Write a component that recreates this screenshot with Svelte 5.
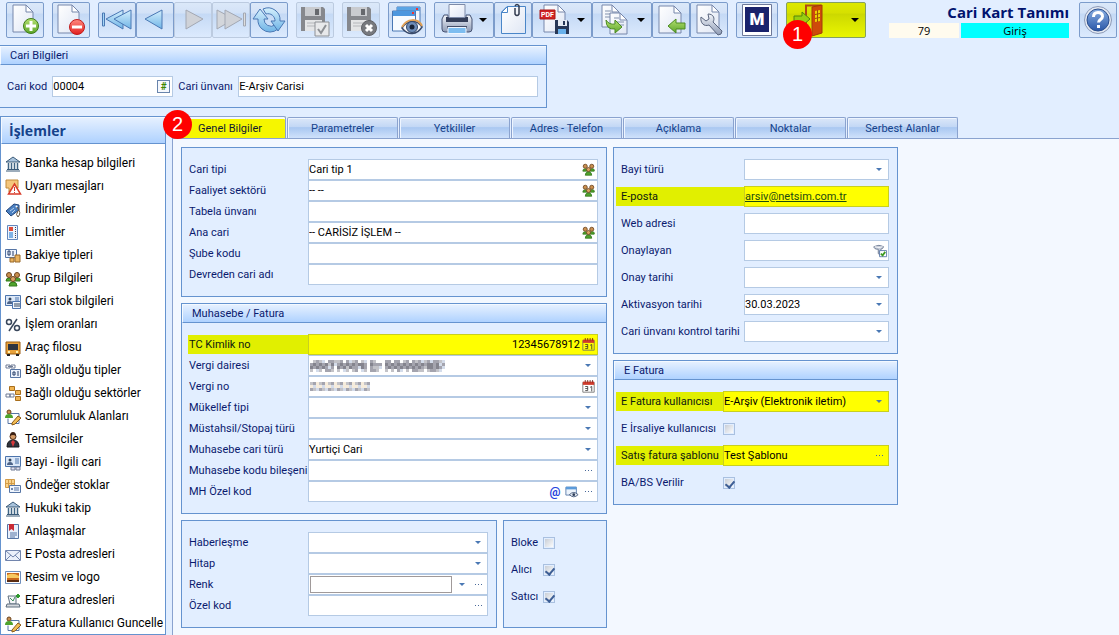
<script>
  const blueDoc = (x, y, w, h) =>
    `<path d="M${x} ${y}h${w - 7}l7 7v${h - 7}h${-w}z" fill="url(#paper)" stroke="#7787ab"/><path d="M${x + w - 7} ${y}v7h7z" fill="#fff" stroke="#7787ab"/>`;

  const floppy =
    '<path d="M5 5h22l2 2v22H5z" fill="#86888d"/><path d="M9 5h16v9H9z" fill="#c9cbcf"/><path d="M19 7h4v6h-4z" fill="#66686d"/><path d="M9 18h17v11H9z" fill="#e4e5e7"/><path d="M11 21h13M11 24h13" stroke="#b5b7bb"/>';

  // 38 x 36 grid, one drawing per toolbar button
  const art = {
    add: blueDoc(7, 3, 20, 27) +
      '<circle cx="25" cy="24" r="7.5" fill="url(#green)" stroke="#3f7d18"/><path d="M25 19v10M20 24h10" stroke="#fff" stroke-width="3"/>',
    remove: blueDoc(6, 3, 21, 28) +
      '<circle cx="25" cy="25" r="7.5" fill="url(#red)" stroke="#c11b1b"/><path d="M20 25h10" stroke="#fff" stroke-width="3"/>',
    first:
      '<path d="M4.5 11h2v13h-2z" fill="#a5d6f5" stroke="#4a78b4"/><path d="M25 8L8 17l17 10z" fill="url(#sky)" stroke="#4a78b4"/><path d="M33 8l-17 9 17 10z" fill="url(#sky)" stroke="#4a78b4"/>',
    prev: '<path d="M26 8L9 17l17 10z" fill="url(#sky)" stroke="#4a78b4"/>',
    next: '<path d="M12 8l17 9-17 10z" fill="#cfd2d8" stroke="#a3a8b3"/>',
    last:
      '<path d="M5 8l17 9-17 10z" fill="#d3d6db" stroke="#a3a8b3"/><path d="M13 8l17 9-17 10z" fill="#cfd2d8" stroke="#a3a8b3"/><path d="M31.5 11h2v13h-2z" fill="#ddd" stroke="#a3a8b3"/>',
    refresh:
      '<path d="M12 27a12 12 0 0 0 16 0l-3-4a7 7 0 0 1-11-6h4l-8-10-7 10h5a12 12 0 0 0 4 10z" fill="url(#sky)" stroke="#4a78b4"/><path d="M13 7a12 12 0 0 1 17 12h5l-7 10-7-10h4a7 7 0 0 0-9-7z" fill="url(#sky)" stroke="#4a78b4"/>',
    save: floppy +
      '<path d="M19 20h14v14H19z" fill="#e8e9eb" stroke="#8d9095"/><path d="M22 27l3 4 5-8" fill="none" stroke="#8d9095" stroke-width="2"/>',
    cancel: floppy +
      '<circle cx="27" cy="26" r="7.5" fill="#77797e" stroke="#5f6166"/><path d="M24 23l6 6M30 23l-6 6" stroke="#fff" stroke-width="3"/>',
    preview:
      '<path d="M9 5h23v17H9z" fill="#f2f7fd" stroke="#4a78b4"/><path d="M9 5h23v4H9z" fill="#5ba4e4"/><path d="M4.5 9h23v20h-23z" fill="#f7fbff" stroke="#4a78b4"/><path d="M5 9h22v5H5z" fill="#4d97de"/><path d="M24 10h2v2h-2zM28 6h2v2h-2z" fill="#e33"/><path d="M14 26c5-8 15-9 20-1-5 8-14 9-20 1z" fill="#fff" stroke="#384a6b" stroke-width="1.5"/><path d="M14 25c5-9 16-9 20-1" fill="none" stroke="#e0a055" stroke-width="2"/><circle cx="24" cy="25" r="5.5" fill="#6e8db8" stroke="#334768"/><circle cx="24" cy="25" r="2.5" fill="#182438"/>',
    print:
      '<path d="M10 13h4v5h18v-5h4l2 4v10q0 3-3 3H11q-3 0-3-3V17z" fill="url(#steel)" stroke="#465373"/><path d="M12 15h22v5H12z" fill="#343e58"/><path d="M15 2.5h16v13H15z" fill="url(#paper)" stroke="#7e8ba8"/><path d="M13 24h20v3H13z" fill="#454f69"/><path d="M14 25.5h18v6H14z" fill="#7dbdf0" stroke="#eef5ff"/>',
    attach:
      '<path d="M13 4.5h18.5v27h-24V10z" fill="url(#paper)" stroke="#4a86c8"/><path d="M7.5 10.5h6v-6z" fill="#fff" stroke="#4a86c8"/><path d="M21 6v6q2 3 4 0V4q-2-3-4 0" fill="none" stroke="#333c50" stroke-width="1.5"/>',
    pdf: blueDoc(12, 3, 21, 27) +
      '<path d="M8 8h15v9H8z" fill="#d32323" stroke="#a81818"/><text x="9" y="15" font-size="7" font-weight="bold" fill="#fff">PDF</text><path d="M23 18h12l2 2v12H23z" fill="#283756"/><path d="M26 18h9v6h-9z" fill="#e6ebf3"/><path d="M31 19h2v4h-2z" fill="#283756"/><path d="M26 27h8v5h-8z" fill="#69b0ea"/>',
    copy: blueDoc(10, 3, 17, 22) +
      '<path d="M13 9h6M13 12h10M13 15h6" stroke="#8392ad"/>' + blueDoc(18, 11, 17, 21) +
      '<path d="M22 16h5M22 20h10M26 23h6" stroke="#8392ad"/><path d="M14 18q3 5 9 4v-4l7 7-7 6v-4q-9 1-9-9z" fill="url(#green)" stroke="#4c8b22"/>',
    import: blueDoc(7, 4, 22, 27) +
      '<path d="M16 24l8-7v4h9v6h-9v4z" fill="url(#green)" stroke="#4c8b22"/>',
    tools: blueDoc(7, 3, 22, 28) +
      '<path d="M11 15l5 4 3-2-1-5c6 0 7 5 5 8l9 9q0 4-4 4l-9-10c-5 2-9-2-8-8z" fill="url(#steel)" stroke="#5b667f"/>',
    mark:
      '<path d="M6.5 2.5h29v31h-29z" fill="#fff" stroke="#6c7899"/><path d="M9 5h24v25H9z" fill="#1a236c"/><text x="21" y="23" text-anchor="middle" font-size="17" font-weight="900" fill="#fff">M</text>',
    exit:
      '<path d="M20 30V3.5h14V30" fill="none" stroke="#b04a10" stroke-width="2"/><path d="M26 5l10-2v28l-10 3z" fill="#ce4a0a" stroke="#a33a08"/><path d="M29 9l5-1v11l-5 1z" fill="#eed200"/><path d="M31.5 8v12M29 12.5l5-1M29 16.5l5-1" stroke="#a05008"/><path d="M8 14h8v-4l8 7-8 7v-4H8z" fill="#98cf10" stroke="#54850c"/>',
    help:
      '<circle cx="19" cy="18" r="13.5" fill="#e4e9f2" stroke="#8c9ab8"/><circle cx="19" cy="18" r="11" fill="url(#orb)" stroke="#2c4f8e"/><path d="M14.5 15q0-4.5 4.5-4.5t4.5 4c0 3-4 3-4 6" fill="none" stroke="#fff" stroke-width="3"/><path d="M18 23h3v3h-3z" fill="#fff"/>'
  };

  const pencil = '<path d="M7 14l6-7 3 2-6 6-3 1z" fill="#f2bd55" stroke="#8a5a18"/>';
  const link = '<path d="M1 2h4v3H1zM6 2h4v3H6zM3 3.5h5" fill="none" stroke="#6e7b94"/>';
  const bank =
    '<path d="M1 6l7-5 7 5z" fill="#a9c3dc" stroke="#3a5a78"/><path d="M3.5 7v6M6.5 7v6M9.5 7v6M12.5 7v6" stroke="#3f6484" stroke-width="1.5"/><path d="M2 13.5h12M1 15h14" stroke="#3a5a78"/>';
  const people =
    '<path d="M1 10q0-3 3-3t4 3zM8 10q0-3 4-3t3 3zM4 15q0-4 4-4t4 4z" fill="#4fa32c" stroke="#34781c"/><circle cx="4" cy="4" r="2.5" fill="#c98f4e" stroke="#6b431d"/><circle cx="12" cy="4" r="2.5" fill="#c98f4e" stroke="#6b431d"/><circle cx="8" cy="8" r="2.5" fill="#d9a263" stroke="#6b431d"/>';
  const card =
    '<path d="M.5 1.5h15v10H.5z" fill="#dce8f8" stroke="#4c74ac"/><circle cx="5" cy="5" r="1.5" fill="#33475f"/><path d="M2 10q0-3 3-3t3 3z" fill="#4e6488"/><path d="M10 4h4M10 6h4M10 8h4" stroke="#4c74ac"/>';
  const person =
    '<path d="M6 4.5h8v10H3v-5" fill="#fff" stroke="#5675a5"/><circle cx="4" cy="3" r="2" fill="#c98f4e" stroke="#6b431d"/><path d="M0 9q0-4 4-4t4 4z" fill="#4fa32c"/>';

  // 16 x 16 grid
  const glyphs = {
    bank,
    people,
    warning:
      '<path d="M1 1h12v8H7l-3 4V9H1z" fill="#f4c67c" stroke="#c28a3b"/><path d="M9.5 5l6 10h-12z" fill="#fff" stroke="#d93d2b" stroke-width="1.5"/><path d="M9.5 8v4M9.5 13v1" stroke="#d93d2b"/>',
    tag:
      '<path d="M1 9l8-7 5 1v5l-8 6z" fill="#4a7fc0" stroke="#23477d"/><circle cx="11.5" cy="4.5" r="1" fill="#fff"/><path d="M5 9l4-3M7 11l3-3" stroke="#b8d2f0"/><path d="M12 5q5 6 1 10-3-2 0-6" fill="none" stroke="#6b5a45"/>',
    limit:
      '<path d="M2.5.5h10v14h-10z" fill="#eef4fd" stroke="#6387bd"/><path d="M4 2h4v4H4z" fill="#df4b38"/><path d="M4 7h4v6H4z" fill="#7fb2e6"/><path d="M10.5 2v12" stroke="#445" stroke-dasharray="1 1"/>',
    balance:
      '<path d="M.5 1.5h11v8H.5z" fill="#edf3fd" stroke="#5675a5"/><path d="M3 3h2v4H3zM8 3v5" fill="none" stroke="#223b66"/><path d="M5 10h4v4H5zM10 7h5v7h-5z" fill="#e8b25e" stroke="#98682a"/>',
    stock: card + '<path d="M7.5 7.5h8v7h-8z" fill="#eff5fd" stroke="#4c74ac"/><path d="M10 9v4M12 9v4M14 9v4" stroke="#33475f"/>',
    percent:
      '<circle cx="4" cy="5" r="2.5" fill="none" stroke="#38465a" stroke-width="1.5"/><circle cx="12" cy="11" r="2.5" fill="none" stroke="#38465a" stroke-width="1.5"/><path d="M12 2L4 14" stroke="#38465a" stroke-width="1.5"/>',
    bus:
      '<path d="M1 2h14v12H1z" fill="#e8a13a" stroke="#9b5e14"/><path d="M3 4h10v6H3z" fill="#2e3440"/><path d="M3 12h2M11 12h2" stroke="#fff2b0" stroke-width="2"/><path d="M2 15h3M11 15h3" stroke="#222" stroke-width="2"/>',
    linkType: link + '<path d="M5.5 6.5h10v8h-10z" fill="#edf3fd" stroke="#5675a5"/><path d="M8 9h2v3H8zM13 8v5" fill="none" stroke="#223b66"/>',
    sector:
      '<path d="M4.5.5h5v4h-5zM10.5 4.5h5v4h-5zM10.5 10.5h5v4h-5z" fill="#f0b452" stroke="#a86e1c"/><path d="M1 8h4v3H1zM5 8h4v3H5z" fill="none" stroke="#6e7b94"/>',
    area: person + pencil,
    agent:
      '<path d="M2 15q0-7 6-7t6 7z" fill="#30343c" stroke="#15171b"/><path d="M8 8l2 2-2 5-2-5z" fill="#d8393b"/><circle cx="8" cy="4.5" r="3" fill="#d59b66" stroke="#4d2a14"/><path d="M5 4q0-4 3-4t3 4q-3-2-6 0z" fill="#3c2113"/>',
    dealer: card + '<path d="M6 12h4v3H6zM11 12h4v3h-4z" fill="#dde" stroke="#6e7b94"/>',
    preset:
      '<path d="M.5 1.5h9v8h-9z" fill="#f9d38c" stroke="#d39c48"/><path d="M.5 5.5h9M3.5 1.5v8M6.5 1.5v8" stroke="#d39c48"/><path d="M4.5 7.5h11v7h-11z" fill="#eff5fd" stroke="#5675a5"/><path d="M9 10h5M9 12h5" stroke="#5675a5"/><circle cx="7" cy="11" r="1" fill="#44618f"/>',
    contract:
      '<path d="M2.5.5h11v14h-11z" fill="#e7f0fc" stroke="#5675a5"/><path d="M4 0h5v7L6.5 5 4 7z" fill="#c92a35"/><path d="M5 9h7M5 11h7M5 13h5" stroke="#5675a5"/>',
    mail:
      '<path d="M.5 3.5h15v10H.5z" fill="#eaf0fa" stroke="#7285ad"/><path d="M1 4l7 6 7-6M1 13l5-5M15 13l-5-5" fill="none" stroke="#7285ad"/>',
    picture:
      '<path d="M.5 1.5h15v12H.5z" fill="#fdfdfd" stroke="#6f8fbd"/><path d="M2 3h12v9H2z" fill="#c8681c"/><path d="M2 5q6-3 12 1v2H2z" fill="#f7c860"/><path d="M2 10h12v2H2z" fill="#5a2c12"/>',
    invoice:
      '<path d="M3 3h8v8H5z" fill="#f4f6f8" stroke="#5e6e7e"/><path d="M2 11h12l1 3H1z" fill="#d5d9de" stroke="#5e6e7e"/><path d="M11 3h4M13 1v4" stroke="#2e9a2e" stroke-width="2"/><path d="M5 5l3 3 2-4" fill="none" stroke="#3a8a5a"/>',
    calendar:
      '<path d="M1 3h14v12H1z" fill="var(--sheet, #fff)" stroke="#6b6b6b"/><path d="M1 2h14v4H1z" fill="#cf3b2c"/><path d="M4 0v3M7 0v3M10 0v3M13 0v3" stroke="#6d1d14"/><path d="M4 8h3v5H4M4 10.5h3M10 9l2-1v6" fill="none" stroke="#333"/>',
    at: '<text x="8" y="12" text-anchor="middle" font-size="14" font-weight="bold" fill="#2342dd">@</text>',
    view:
      '<path d="M1 2.5h12v9H1z" fill="#edf4fc" stroke="#587aa8"/><path d="M1 2h12v3H1z" fill="#5b9bdb"/><path d="M5 11q5-5 10 0-5 5-10 0z" fill="#dfe7f1" stroke="#47597a"/><circle cx="10" cy="11" r="1.5" fill="#2b3a55"/>',
    filter:
      '<path d="M1 3q6-3 11 0 0 2-3 3v7l-3-2V6Q1 6 1 3z" fill="#c5ccd8" stroke="#68768f"/><path d="M2 3q5 2 9 0" fill="none" stroke="#fff"/><path d="M7.5 7.5h8v7h-8z" fill="#fff" stroke="#5675a5"/><path d="M9 11l2 2 3-4" fill="none" stroke="#3c9a22" stroke-width="2"/>'
  };

  const toolbar = [
    [{ id: 'add', title: 'Yeni' }],
    [{ id: 'remove', title: 'Sil' }],
    [
      { id: 'first', title: 'İlk kayıt' },
      { id: 'prev', title: 'Önceki kayıt' },
      { id: 'next', title: 'Sonraki kayıt', off: true },
      { id: 'last', title: 'Son kayıt', off: true },
      { id: 'refresh', title: 'Yenile' }
    ],
    [{ id: 'save', title: 'Kaydet', off: true }],
    [{ id: 'cancel', title: 'Vazgeç', off: true }],
    [{ id: 'preview', title: 'Önizleme' }],
    [
      { id: 'print', title: 'Yazdır', menu: true },
      { id: 'attach', title: 'Ekler' },
      { id: 'pdf', title: 'PDF kaydet', menu: true },
      { id: 'copy', title: 'Kopyala', menu: true },
      { id: 'import', title: 'Aktar' },
      { id: 'tools', title: 'Ayarlar' }
    ],
    [{ id: 'mark', title: 'M', wide: true }],
    [{ id: 'exit', title: 'Çıkış', menu: true, exit: true }]
  ];

  const actions = [
    ['bank', 'Banka hesap bilgileri'],
    ['warning', 'Uyarı mesajları'],
    ['tag', 'İndirimler'],
    ['limit', 'Limitler'],
    ['balance', 'Bakiye tipleri'],
    ['people', 'Grup Bilgileri'],
    ['stock', 'Cari stok bilgileri'],
    ['percent', 'İşlem oranları'],
    ['bus', 'Araç filosu'],
    ['linkType', 'Bağlı olduğu tipler'],
    ['sector', 'Bağlı olduğu sektörler'],
    ['area', 'Sorumluluk Alanları'],
    ['agent', 'Temsilciler'],
    ['dealer', 'Bayi - İlgili cari'],
    ['preset', 'Öndeğer stoklar'],
    ['bank', 'Hukuki takip'],
    ['contract', 'Anlaşmalar'],
    ['mail', 'E Posta adresleri'],
    ['picture', 'Resim ve logo'],
    ['invoice', 'EFatura adresleri'],
    ['area', 'EFatura Kullanıcı Guncelle']
  ];

  const tabs = ['Genel Bilgiler', 'Parametreler', 'Yetkililer', 'Adres - Telefon', 'Açıklama', 'Noktalar', 'Serbest Alanlar'];
  let activeTab = $state(0);

  const general = [
    { id: 'tip', label: 'Cari tipi', value: 'Cari tip 1', icons: ['people'] },
    { id: 'sektor', label: 'Faaliyet sektörü', value: '-- --', icons: ['people'] },
    { id: 'tabela', label: 'Tabela ünvanı' },
    { id: 'ana', label: 'Ana cari', value: '-- CARİSİZ İŞLEM --', icons: ['people'] },
    { id: 'sube', label: 'Şube kodu' },
    { id: 'devreden', label: 'Devreden cari adı' }
  ];

  const accounting = [
    { id: 'tc', label: 'TC Kimlik no', value: '12345678912', icons: ['calendar'], marked: true, right: true },
    { id: 'daire', label: 'Vergi dairesi', select: true, mask: 'office' },
    { id: 'vergi', label: 'Vergi no', icons: ['calendar'], mask: 'number' },
    { id: 'mukellef', label: 'Mükellef tipi', select: true },
    { id: 'stopaj', label: 'Müstahsil/Stopaj türü', select: true },
    { id: 'cariTuru', label: 'Muhasebe cari türü', value: 'Yurtiçi Cari', select: true },
    { id: 'bilesen', label: 'Muhasebe kodu bileşeni', icons: ['dots'] },
    { id: 'mhOzel', label: 'MH Özel kod', icons: ['at', 'view', 'dots'] }
  ];

  const contact = [
    { id: 'haber', label: 'Haberleşme', select: true },
    { id: 'hitap', label: 'Hitap', select: true },
    { id: 'renk', label: 'Renk', icons: ['arrow', 'dots'], swatch: true },
    { id: 'ozel', label: 'Özel kod', icons: ['dots'] }
  ];

  const flags = [
    { id: 'bloke', label: 'Bloke', check: true },
    { id: 'alici', label: 'Alıcı', check: true, checked: true },
    { id: 'satici', label: 'Satıcı', check: true, checked: true }
  ];

  const dealer = [
    { id: 'bayi', label: 'Bayi türü', select: true },
    { id: 'eposta', label: 'E-posta', value: 'arsiv@netsim.com.tr', marked: true, link: true },
    { id: 'web', label: 'Web adresi' },
    { id: 'onaylayan', label: 'Onaylayan', icons: ['filter'] },
    { id: 'onay', label: 'Onay tarihi', select: true },
    { id: 'aktivasyon', label: 'Aktivasyon tarihi', value: '30.03.2023', select: true },
    { id: 'kontrol', label: 'Cari ünvanı kontrol tarihi', select: true }
  ];

  const einvoice = [
    { id: 'efatura', label: 'E Fatura kullanıcısı', value: 'E-Arşiv (Elektronik iletim)', select: true, marked: true },
    { id: 'eirsaliye', label: 'E İrsaliye kullanıcısı', check: true },
    { id: 'sablon', label: 'Satış fatura şablonu', value: 'Test Şablonu', icons: ['dots'], marked: true },
    { id: 'babs', label: 'BA/BS Verilir', check: true, checked: true }
  ];

  // censored values, one digit per 3px block
  const shades = ['#ffffff', '#f6ecdc', '#d4dcea', '#c3c3c8', '#a4a4ae', '#84848e'];
  const masks = {
    office: [
      '034320443340423403204300044044034043423424432',
      '454545352454545455405444054545454545454554524',
      '545454240545354425404332045454545454543554542',
      '302304430302303402304430030304203044330344320'
    ],
    number: ['34134134134134134134', '12112112112112112112', '43243243243243243243']
  };
</script>

{#snippet glyph(name, size)}
  <svg class="glyph" width={size} height={size} viewBox="0 0 16 16" aria-hidden="true">{@html glyphs[name]}</svg>
{/snippet}

{#snippet tool(t)}
  <button class="tool" class:wide={t.wide} class:menu={t.menu} class:exit={t.exit} disabled={t.off} aria-label={t.title}>
    <svg class="art" viewBox="1 1 36 34" aria-hidden="true">{@html art[t.id]}</svg>
    {#if t.menu}<span class="caret"></span>{/if}
    {#if t.exit}<span class="badge badge-exit">1</span>{/if}
  </button>
{/snippet}

{#snippet row(f)}
  <div class="row" class:marked={f.marked}>
    <label for={f.id}>{f.label}</label>
    {#if f.check}
      <input class="check" type="checkbox" id={f.id} checked={f.checked} />
    {:else}
      <div class="field">
        {#if f.mask}
          <svg class="mask" width={masks[f.mask][0].length * 3} height={masks[f.mask].length * 3} aria-hidden="true">
            {#each masks[f.mask] as line, y}
              {#each line as c, x}
                <rect x={x * 3} y={y * 3} width="3" height="3" fill={shades[c]} />
              {/each}
            {/each}
          </svg>
        {/if}
        {#if f.select}
          <select id={f.id}><option>{f.value ?? ''}</option></select>
          <span class="arrow over"></span>
        {:else}
          <input id={f.id} type="text" value={f.value ?? ''} class:right={f.right} class:link={f.link} class:swatch={f.swatch} />
        {/if}
        {#each f.icons ?? [] as name}
          <button class="mini" aria-label={name}>
            {#if name === 'dots'}
              <span class="dots"></span>
            {:else if name === 'arrow'}
              <span class="arrow"></span>
            {:else}
              {@render glyph(name, name === 'people' || name === 'calendar' ? 13 : 14)}
            {/if}
          </button>
        {/each}
      </div>
    {/if}
  </div>
{/snippet}

<svg class="defs" width="0" height="0" aria-hidden="true">
  <defs>
    <linearGradient id="paper" x2="1" y2="1"><stop stop-color="#fff" /><stop offset="1" stop-color="#dfe6f4" /></linearGradient>
    <linearGradient id="sky" x2="0" y2="1"><stop stop-color="#d4effd" /><stop offset="1" stop-color="#6fb4e6" /></linearGradient>
    <linearGradient id="green" x2="0" y2="1"><stop stop-color="#b4e070" /><stop offset="1" stop-color="#5ca52a" /></linearGradient>
    <linearGradient id="red" x2="0" y2="1"><stop stop-color="#ff8a80" /><stop offset="1" stop-color="#e21f1f" /></linearGradient>
    <linearGradient id="steel" x2="0" y2="1"><stop stop-color="#f2f5fa" /><stop offset="1" stop-color="#8e9bb5" /></linearGradient>
    <linearGradient id="orb" x2="0" y2="1"><stop stop-color="#88aee2" /><stop offset="1" stop-color="#2a57a8" /></linearGradient>
  </defs>
</svg>

<div class="app">
  <header>
    <div class="toolbar">
      {#each toolbar as group}
        <div class="group">
          {#each group as t}
            {@render tool(t)}
          {/each}
        </div>
      {/each}
    </div>
    <div class="heading">
      <h1>Cari Kart Tanımı</h1>
      <div class="status">
        <span class="count">79</span>
        <span class="mode">Giriş</span>
      </div>
    </div>
    {@render tool({ id: 'help', title: 'Yardım' })}
  </header>

  <section class="panel top">
    <h2>Cari Bilgileri</h2>
    <div class="top-row">
      <label for="kod">Cari kod</label>
      <div class="field code">
        <input id="kod" type="text" value="00004" />
        <button class="hash">#</button>
      </div>
      <label for="unvan">Cari ünvanı</label>
      <div class="field"><input id="unvan" type="text" value="E-Arşiv Carisi" /></div>
    </div>
  </section>

  <div class="body">
    <nav>
      <h2>İşlemler</h2>
      <ul>
        {#each actions as [icon, text]}
          <li><a href="#top">{@render glyph(icon, 16)}{text}</a></li>
        {/each}
      </ul>
    </nav>

    <main>
      <div class="tabs" role="tablist">
        {#each tabs as tab, i}
          <button role="tab" class="tab" class:active={activeTab === i} aria-selected={activeTab === i} onclick={() => (activeTab = i)}>
            {tab}
          </button>
        {/each}
        <span class="badge badge-tab">2</span>
      </div>

      <div class="page">
        <div class="column">
          <section class="panel"><div class="rows">{#each general as f}{@render row(f)}{/each}</div></section>
          <section class="panel">
            <h2>Muhasebe / Fatura</h2>
            <div class="rows">{#each accounting as f}{@render row(f)}{/each}</div>
          </section>
          <div class="split">
            <section class="panel"><div class="rows">{#each contact as f}{@render row(f)}{/each}</div></section>
            <section class="panel flags"><div class="rows loose">{#each flags as f}{@render row(f)}{/each}</div></section>
          </div>
        </div>
        <div class="column">
          <section class="panel dealer"><div class="rows loose">{#each dealer as f}{@render row(f)}{/each}</div></section>
          <section class="panel einvoice">
            <h2>E Fatura</h2>
            <div class="rows loose">{#each einvoice as f}{@render row(f)}{/each}</div>
          </section>
        </div>
      </div>
    </main>
  </div>
</div>

<style>
  :global(body) {
    background: #e2eeff;
  }

  .app {
    display: flex;
    flex-direction: column;
    height: 100vh;
    overflow: hidden;
    font-family: Roboto, "Liberation Sans", sans-serif;
    font-size: 11px;
    line-height: 13px;
    color: #0a1a6e;
  }

  .defs {
    position: absolute;
  }

  * {
    box-sizing: border-box;
  }

  h1,
  h2,
  ul {
    margin: 0;
    padding: 0;
  }

  button,
  input,
  select {
    font: inherit;
    color: inherit;
    margin: 0;
  }

  header {
    display: flex;
    align-items: flex-start;
    padding: 2px 2px 0 6px;
  }

  .toolbar {
    display: flex;
    gap: 8px;
    flex: 1;
  }

  .group {
    display: flex;
  }

  .tool {
    display: flex;
    align-items: center;
    position: relative;
    width: 38px;
    height: 36px;
    padding: 0;
    border: 1px solid #7c9ccb;
    border-radius: 2px;
    background: linear-gradient(#dbe8f9, #d3e2f7 30%, #c4d9f5 32%, #dceafd);
  }

  .tool:disabled {
    border-color: #bccbe0;
  }

  .tool.wide {
    width: 42px;
  }

  .tool.menu {
    width: 60px;
  }

  .tool.exit {
    width: 80px;
    background: linear-gradient(#dde800, #d6e000 30%, #ccd800 32%, #eaf600);
    border-color: #84a060;
  }

  .art {
    width: 36px;
    height: 34px;
    flex: none;
    overflow: visible;
  }

  .glyph {
    flex: none;
    overflow: visible;
  }

  .caret {
    margin: 0 6px 0 auto;
    border: 4px solid transparent;
    border-top-color: #000;
    border-bottom: 0;
  }

  .badge {
    position: absolute;
    width: 29px;
    height: 29px;
    border-radius: 50%;
    background: #f00;
    color: #fff;
    font-family: "Liberation Sans", sans-serif;
    font-size: 20px;
    line-height: 29px;
    text-align: center;
  }

  .badge-exit {
    left: -4px;
    top: 17px;
    z-index: 1;
  }

  .badge-tab {
    left: -9px;
    top: -6px;
  }

  .heading {
    width: 180px;
    margin-right: 10px;
    font-family: "Open Sans", sans-serif;
  }

  h1 {
    font-size: 15px;
    line-height: 21px;
    text-align: right;
    color: #00126e;
  }

  .status {
    display: flex;
    gap: 2px;
    color: #000;
    text-align: center;
    line-height: 15px;
  }

  .count {
    flex: 70;
    background: #fffbee;
  }

  .mode {
    flex: 108;
    background: #0ff;
  }

  .panel {
    border: 1px solid #6593cf;
    background: #e2eeff;
  }

  .panel h2 {
    padding-left: 9px;
    border: 1px solid #f4f9ff;
    border-right: 0;
    border-bottom-color: #6593cf;
    background: linear-gradient(#e5f0ff, #afd2ff);
    font-size: 11px;
    font-weight: normal;
    line-height: 17px;
  }

  .top {
    max-width: 547px;
    margin-top: 7px;
    border-left: 0;
  }

  .top-row {
    display: flex;
    align-items: center;
    gap: 5px;
    padding: 11px 8px 10px 7px;
  }

  .top-row label {
    flex: 0 0 55px;
    white-space: nowrap;
  }

  .top-row label:first-child {
    flex-basis: 40px;
  }

  .field {
    display: flex;
    align-items: center;
    position: relative;
    flex: 1;
    min-width: 0;
    height: 21px;
    border: 1px solid #b5cae4;
    background: #fff;
    color: #000;
  }

  .field.code {
    flex: 0 0 121px;
  }

  .field input,
  .field select {
    appearance: none;
    flex: 1;
    min-width: 0;
    width: 100%;
    height: 19px;
    padding: 0;
    border: 0;
    border-radius: 0;
    outline: 0;
    background: transparent;
  }

  .field .right {
    text-align: right;
  }

  .field .link {
    text-decoration: underline;
    color: #1c4a10;
  }

  .field .swatch {
    height: 17px;
    margin: 0 1px;
    border: 1px solid #a09a9a;
  }

  .hash {
    width: 13px;
    height: 13px;
    margin-right: 2px;
    padding: 0;
    border: 1px solid #6884ac;
    background: #f5f8fd;
    color: #3c8600;
    font-size: 10px;
    font-weight: bold;
    line-height: 10px;
  }

  .mini {
    display: flex;
    align-items: center;
    justify-content: center;
    width: 17px;
    height: 17px;
    padding: 0;
    border: 0;
    background: none;
  }

  .arrow {
    border: 3px solid transparent;
    border-top-color: #4a78b4;
    border-bottom: 0;
  }

  .over {
    position: absolute;
    right: 6px;
    pointer-events: none;
  }

  .dots {
    width: 7px;
    height: 1px;
    background: repeating-linear-gradient(90deg, #4a6a9a 0 1px, transparent 1px 3px);
  }

  .mask {
    position: absolute;
    left: 1px;
  }

  .rows {
    padding: 11px 8px 11px 6px;
    --label: 120px;
    --indent: 1px;
  }

  .loose {
    display: grid;
    gap: 6px;
  }

  .row {
    display: flex;
    align-items: center;
    height: 21px;
  }

  .row label {
    flex: 0 0 var(--label);
    min-width: 0;
    padding-left: var(--indent);
    white-space: nowrap;
    line-height: 19px;
  }

  .marked label {
    background: #e1ef00;
    color: #0d1a10;
  }

  .marked .field {
    background: #ff0;
    border-color: #c8cf20;
    --sheet: #ff0;
  }

  .dealer .rows,
  .einvoice .rows {
    padding-left: 2px;
    --label: 128px;
    --indent: 5px;
  }

  .einvoice .rows {
    --label: 107px;
  }

  .flags .rows {
    padding-left: 7px;
    --label: 32px;
    --indent: 0px;
  }

  .check {
    appearance: none;
    width: 12px;
    height: 12px;
    border: 1px solid #a9c0e0;
    background: linear-gradient(135deg, #c9ced6, #fbfcfd) content-box #fff;
    padding: 1px;
  }

  .check:checked::after {
    content: "";
    display: block;
    width: 4px;
    height: 7px;
    margin-left: 2px;
    border: solid #3e5f96;
    border-width: 0 2px 2px 0;
    transform: rotate(40deg);
  }

  .body {
    display: flex;
    gap: 6px;
    flex: 1;
    min-height: 0;
    margin-top: 8px;
  }

  nav {
    flex: 0 0 166px;
    min-width: 0;
    border: 1px solid #6593cf;
    background: #fff;
  }

  nav h2 {
    padding-left: 7px;
    border: 1px solid #f4f9ff;
    border-right: 0;
    border-bottom-color: #6593cf;
    background: linear-gradient(#e5f0ff, #afd2ff);
    font-family: "Open Sans", sans-serif;
    font-size: 14px;
    line-height: 25px;
    color: #15428b;
  }

  ul {
    padding-top: 8px;
    list-style: none;
  }

  nav a {
    display: flex;
    align-items: center;
    gap: 4px;
    height: 23px;
    padding-left: 4px;
    font-size: 12px;
    color: #000;
    text-decoration: none;
    white-space: nowrap;
  }

  main {
    display: flex;
    flex-direction: column;
    flex: 1;
    min-width: 0;
  }

  .tabs {
    display: flex;
    align-items: flex-end;
    gap: 1px;
    position: relative;
    height: 22px;
    padding-left: 2px;
  }

  .tab {
    flex: 0 1 111px;
    height: 21px;
    padding: 1px 0 0;
    border: 1px solid #8ba3cf;
    border-bottom: 0;
    border-radius: 2px 2px 0 0;
    box-shadow: inset 1px 1px #eef5ff;
    background: linear-gradient(#dbe7f9, #c2d7f5 45%, #a9c7f1 48%, #cfe1fb);
    color: #15428b;
  }

  .tab.active {
    flex-basis: 112px;
    height: 22px;
    background: #f6f600;
    box-shadow: inset 0 2px #f3f8ff;
    color: #101a30;
  }

  .page {
    display: grid;
    grid-template-columns: minmax(0, 426px) minmax(0, 285px);
    align-content: start;
    gap: 6px;
    flex: 1;
    padding: 8px;
    border: solid #8ba3cf;
    border-width: 1px 0 0 1px;
    background: #f3f8ff;
  }

  .column {
    display: flex;
    flex-direction: column;
    gap: 6px;
  }

  .split {
    display: grid;
    grid-template-columns: 316fr 104fr;
    gap: 6px;
  }
</style>
